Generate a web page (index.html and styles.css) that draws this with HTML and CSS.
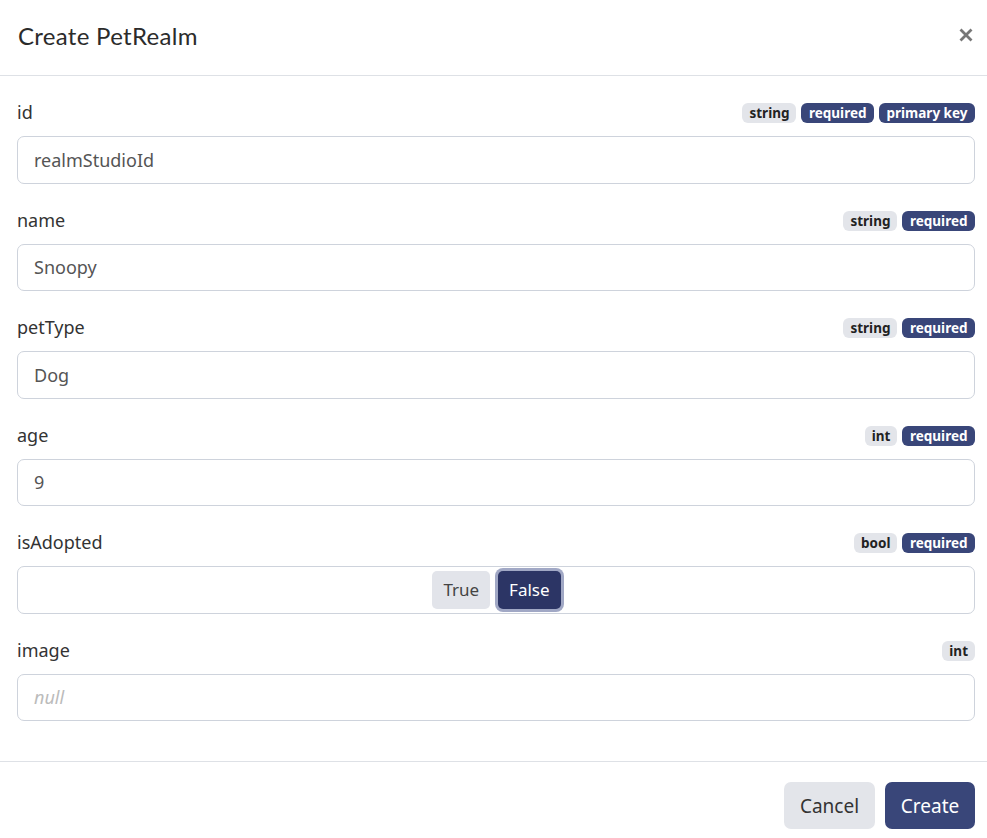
FILE: index.html
```html
<!DOCTYPE html>
<html>
<head>
<meta charset="utf-8">
<link rel="stylesheet" href="styles.css">
</head>
<body>
<div class="modal">
  <div class="modal-header">
    <h1 class="title">Create PetRealm</h1>
    <button class="close" aria-label="Close">
      <svg width="16" height="16" viewBox="0 0 16 16"><path d="M2.5 2.5 L13.5 13.5 M13.5 2.5 L2.5 13.5" stroke="#777" stroke-width="2.8" stroke-linecap="butt"/></svg>
    </button>
  </div>
  <div class="modal-body">
    <div class="field">
      <div class="field-head"><span class="label">id</span><span class="badges"><span class="badge gray">string</span><span class="badge navy">required</span><span class="badge navy">primary key</span></span></div>
      <div class="input">realmStudioId</div>
    </div>
    <div class="field">
      <div class="field-head"><span class="label">name</span><span class="badges"><span class="badge gray">string</span><span class="badge navy">required</span></span></div>
      <div class="input">Snoopy</div>
    </div>
    <div class="field">
      <div class="field-head"><span class="label">petType</span><span class="badges"><span class="badge gray">string</span><span class="badge navy">required</span></span></div>
      <div class="input">Dog</div>
    </div>
    <div class="field">
      <div class="field-head"><span class="label">age</span><span class="badges"><span class="badge gray">int</span><span class="badge navy">required</span></span></div>
      <div class="input">9</div>
    </div>
    <div class="field">
      <div class="field-head"><span class="label">isAdopted</span><span class="badges"><span class="badge gray">bool</span><span class="badge navy">required</span></span></div>
      <div class="input toggle-box"><span class="tbtn off">True</span><span class="tbtn on">False</span></div>
    </div>
    <div class="field">
      <div class="field-head"><span class="label">image</span><span class="badges"><span class="badge gray">int</span></span></div>
      <div class="input placeholder">null</div>
    </div>
  </div>
  <div class="modal-footer">
    <button class="btn cancel">Cancel</button>
    <button class="btn create">Create</button>
  </div>
</div>
</body>
</html>
```
FILE: styles.css
```css
html, body {
  margin: 0;
  padding: 0;
  background: #fff;
}
body {
  font-family: "Noto Sans", "Open Sans", sans-serif;
  color: #333;
}
.modal {
  width: 987px;
}
.modal-header {
  height: 76px;
  border-bottom: 1px solid #dee1e6;
  display: flex;
  align-items: center;
  justify-content: space-between;
  padding: 0 14px 0 18px;
  box-sizing: border-box;
}
.title {
  margin: 0;
  font-family: "Lato", "Noto Sans", sans-serif;
  font-weight: 400;
  font-size: 24px;
  color: #2b2b2b;
  letter-spacing: 0.3px;
  position: relative;
  top: -2px;
}
.close {
  border: none;
  background: none;
  padding: 0;
  width: 16px;
  height: 16px;
  display: flex;
  align-items: center;
  justify-content: center;
  position: relative;
  top: -3px;
  left: 1px;
}
.modal-body {
  padding: 24px 12px 40px 17px;
}
.field + .field {
  margin-top: 24px;
}
.field-head {
  height: 24px;
  display: flex;
  align-items: center;
  justify-content: space-between;
  margin-bottom: 12px;
}
.label {
  font-size: 18px;
  color: #333;
}
.badges {
  display: flex;
  gap: 5px;
  position: relative;
  top: 1px;
}
.badge {
  height: 20px;
  line-height: 20px;
  padding: 0 7px;
  border-radius: 6px;
  font-size: 13.5px;
  font-weight: 700;
  font-family: "Noto Sans", sans-serif;
}
.badge.gray {
  background: #e3e5ea;
  color: #222;
}
.badge.navy {
  background: #394679;
  color: #fff;
  padding: 0 7.5px;
}
.input {
  height: 47.5px;
  box-sizing: border-box;
  border: 1px solid #ced3dc;
  border-radius: 7px;
  padding: 0 16px;
  display: flex;
  align-items: center;
  font-size: 18px;
  color: #555;
}
.placeholder {
  color: #bbb;
  font-style: italic;
}
.toggle-box {
  justify-content: center;
  gap: 9px;
}
.tbtn {
  height: 38px;
  line-height: 38px;
  padding: 0 11px;
  border-radius: 5px;
  font-size: 17px;
  box-sizing: border-box;
}
.tbtn.off {
  background: #e2e4ea;
  color: #444;
  position: relative;
  left: 1px;
}
.tbtn.on {
  background: #2c3565;
  color: #fff;
  box-shadow: 0 0 0 3px #a1a8c5;
}
.modal-footer {
  border-top: 1px solid #dee1e6;
  display: flex;
  justify-content: flex-end;
  gap: 10px;
  padding: 20px 12px 12px 17px;
}
.btn {
  height: 47px;
  border: none;
  border-radius: 7px;
  font-family: "Noto Sans", sans-serif;
  font-size: 19px;
  padding: 0 15px;
}
.btn.cancel {
  background: #e3e5ea;
  color: #333;
  width: 91px;
}
.btn.create {
  background: #394679;
  color: #fff;
  width: 90px;
}
```
